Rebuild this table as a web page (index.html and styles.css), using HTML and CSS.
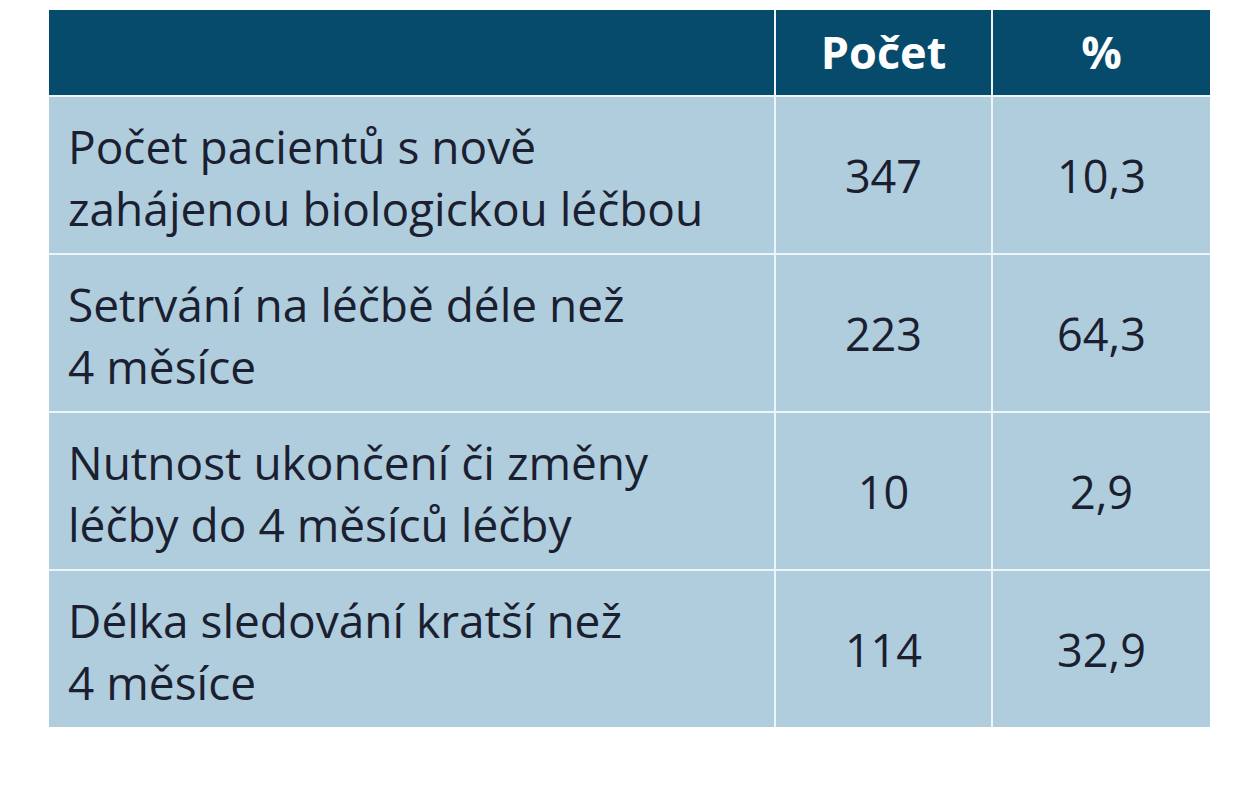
FILE: index.html
```html
<!DOCTYPE html>
<html lang="cs">
<head>
<meta charset="utf-8">
<title>Tabulka</title>
<link rel="stylesheet" href="styles.css">
</head>
<body>
<div class="page">
  <div class="grid">
    <div class="head"></div>
    <div class="head num">Počet</div>
    <div class="head num">%</div>

    <div class="cell label">Počet pacientů s nově<br>zahájenou biologickou léčbou</div>
    <div class="cell num">347</div>
    <div class="cell num">10,3</div>

    <div class="cell label">Setrvání na léčbě déle než<br>4 měsíce</div>
    <div class="cell num">223</div>
    <div class="cell num">64,3</div>

    <div class="cell label">Nutnost ukončení či změny<br>léčby do 4 měsíců léčby</div>
    <div class="cell num">10</div>
    <div class="cell num">2,9</div>

    <div class="cell label">Délka sledování kratší než<br>4 měsíce</div>
    <div class="cell num">114</div>
    <div class="cell num">32,9</div>
  </div>
</div>
</body>
</html>
```
FILE: styles.css
```css
html, body {
  margin: 0;
  background: #ffffff;
}
.page {
  padding: 10px 0 0 49px;
}
.grid {
  display: grid;
  width: 1161px;
  grid-template-columns: 725px 215px 217px;
  grid-template-rows: 85px 156px 156px 156px 156px;
  gap: 2px;
  background: #eef5f8;
  font-family: "Open Sans", "Noto Sans", sans-serif;
}
.head {
  background: #074b6c;
  color: #ffffff;
  font-weight: 700;
  font-size: 45px;
  padding-bottom: 2px;
  display: flex;
  align-items: center;
  justify-content: center;
}
.cell {
  background: #b0cddd;
  color: #1a2030;
  font-size: 45px;
  display: flex;
  align-items: center;
}
.label {
  font-size: 46px;
  padding-left: 19px;
  padding-top: 3px;
  line-height: 62px;
}
.num {
  justify-content: center;
}
```
